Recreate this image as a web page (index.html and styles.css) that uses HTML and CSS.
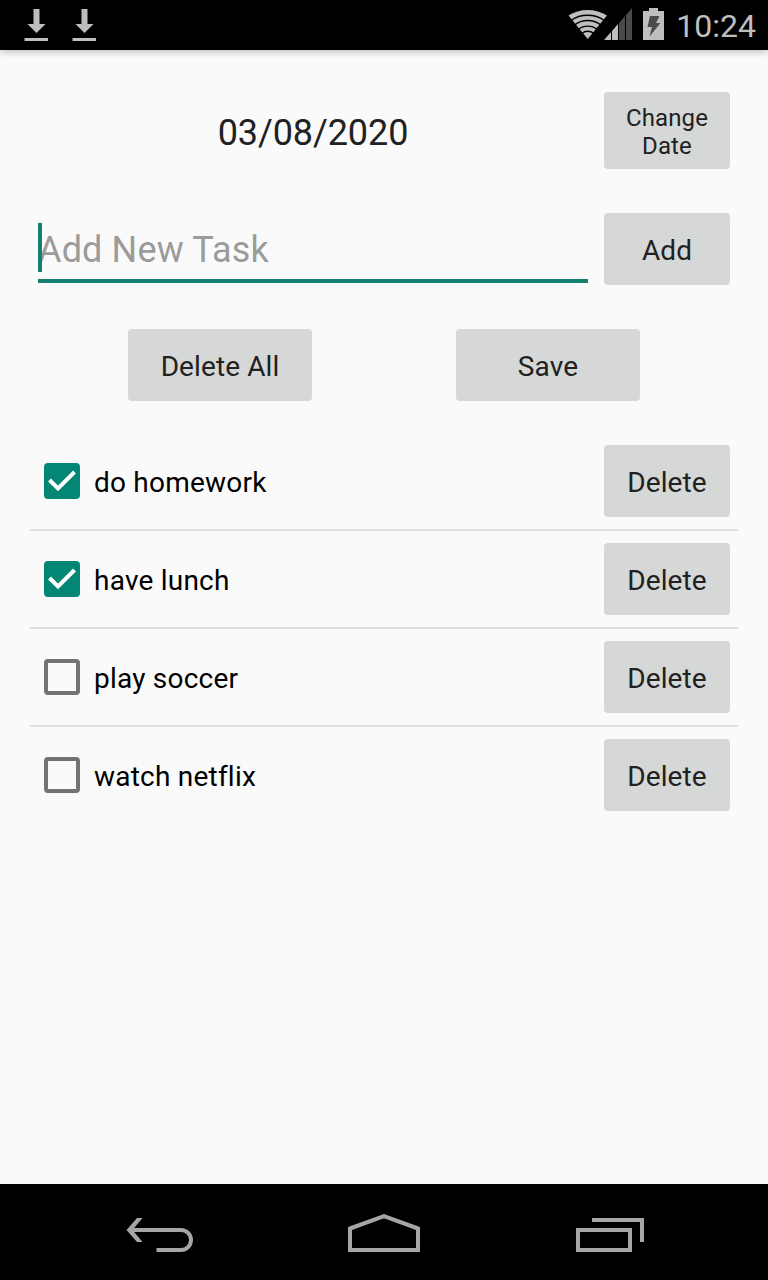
FILE: index.html
```
<!DOCTYPE html>
<html lang="en">
<head>
  <meta charset="UTF-8">
  <meta name="viewport" content="width=device-width, initial-scale=1">
  <title>To Do List</title>
  <link rel="stylesheet" href="styles.css">
</head>
<body>
  <header class="status-bar">
    <div class="notifications">
      <svg width="24" height="34" viewBox="0 0 24 34"><path d="M9.500 1h6v15h6l-9 9-9-9h6zM0.500 30h23.500v3H0.500z"/></svg>
      <svg width="24" height="34" viewBox="0 0 24 34"><path d="M9.500 1h6v15h6l-9 9-9-9h6zM0.500 30h23.500v3H0.500z"/></svg>
    </div>
    <div class="system">
      <svg class="wifi" width="40" height="32" viewBox="0 0 40 32">
        <path d="M0.500 7.500C11 0 28 0 39 7.500L19.700 31z"/>
        <g class="gap">
          <path d="M3.500 12.300C12 5.500 27 5.500 36 12.300"/>
          <path d="M7 16.800C14 11 25 11 32.500 16.800"/>
          <path d="M10.500 21.300C15.500 17 24 17 29 21.300"/>
          <path d="M14 25.500C17 22.500 22.500 22.500 25.500 25.500"/>
        </g>
      </svg>
      <svg class="signal" width="28" height="32" viewBox="0 0 28 32">
        <path d="M0 32L7 24v8zM8 32V23l6-7v16z"/>
        <path class="dim" d="M15 32V15l6-7v24zM22 32V7l6-7v32z"/>
      </svg>
      <svg class="battery" width="21" height="32" viewBox="0 0 21 32">
        <path d="M6 0h9v3h6v29H0V3h6z"/>
        <path class="bolt" d="M7 8h9.500l-3.500 7h4.500L6.500 28.500 9 19H4.500z"/>
      </svg>
      <span class="clock">10:24</span>
    </div>
  </header>

  <main>
    <div class="row date-row">
      <div class="date">03/08/2020</div>
      <button class="small">Change<br>Date</button>
    </div>

    <div class="row">
      <div class="field">
        <input type="text" id="newTask" placeholder="Add New Task">
        <span class="cursor"></span>
      </div>
      <button>Add</button>
    </div>

    <div class="actions">
      <button>Delete All</button>
      <button>Save</button>
    </div>

    <ul class="tasks">
      <li>
        <label><input type="checkbox" checked><span class="box"><svg width="36" height="36" viewBox="0 0 36 36"><path d="M5.500 17l8.500 8.500L30.500 9"/></svg></span><span class="name">do homework</span></label>
        <button>Delete</button>
      </li>
      <li>
        <label><input type="checkbox" checked><span class="box"><svg width="36" height="36" viewBox="0 0 36 36"><path d="M5.500 17l8.500 8.500L30.500 9"/></svg></span><span class="name">have lunch</span></label>
        <button>Delete</button>
      </li>
      <li>
        <label><input type="checkbox"><span class="box"><svg width="36" height="36" viewBox="0 0 36 36"><path d="M5.500 17l8.500 8.500L30.500 9"/></svg></span><span class="name">play soccer</span></label>
        <button>Delete</button>
      </li>
      <li>
        <label><input type="checkbox"><span class="box"><svg width="36" height="36" viewBox="0 0 36 36"><path d="M5.500 17l8.500 8.500L30.500 9"/></svg></span><span class="name">watch netflix</span></label>
        <button>Delete</button>
      </li>
    </ul>
  </main>

  <nav class="nav-bar">
    <svg width="72" height="40" viewBox="0 0 72 40">
      <path d="M6 18H57a10 10 0 0 1 0 20H32.500"/>
      <path class="head" d="M13 6h5.500L8.500 18l10 12H13L2.500 18z"/>
    </svg>
    <svg width="72" height="40" viewBox="0 0 72 40"><path d="M2 38V16.500L36 4.200 70 16.500V38z"/></svg>
    <svg width="72" height="40" viewBox="0 0 72 40"><path d="M6 18H58V38H6zM20 8H70V30"/></svg>
  </nav>
</body>
</html>
```

FILE: styles.css
```
* { box-sizing: border-box; }
body {
  font-family: Roboto, sans-serif;
  font-variant-ligatures: none;
  margin: 0;
  height: 1280px;
  display: flex;
  flex-direction: column;
  background: #fafafa;
  color: #212121;
  font-size: 28px;
}
svg {
  display: block;
}

/* status bar */
.status-bar {
  height: 50px;
  padding: 0 12px 0 24px;
  display: flex;
  justify-content: space-between;
  align-items: center;
  background: #000;
  color: #bebebe;
  fill: #bebebe;
  box-shadow: 0 1px 8px rgba(0, 0, 0, 0.3);
}
.notifications {
  display: flex;
  gap: 24px;
}
.system {
  display: flex;
  align-items: flex-start;
}
.system svg {
  margin-top: 8px;
}
.wifi .gap {
  fill: none;
  stroke: #000;
  stroke-width: 1.4;
}
.system .signal {
  margin-left: -4px;
}
.signal .dim,
.battery .bolt {
  fill: #4a4a4a;
}
.system .battery {
  margin-left: 11px;
  margin-right: 12px;
}
.clock {
  font-size: 32px;
  line-height: 52px;
  height: 50px;
}

/* content */
main {
  flex: 1;
  padding: 42px 30px 0;
}
button {
  width: 126px;
  height: 72px;
  padding: 2px 0 0;
  border: none;
  border-radius: 4px;
  background: #d6d7d7;
  color: #212121;
  font: inherit;
  letter-spacing: 0.1px;
  line-height: 33px;
  cursor: pointer;
}
button:hover {
  background: #c8c9c9;
}
button.small {
  height: 77px;
  font-size: 24px;
  line-height: 28px;
}
.row {
  display: flex;
  gap: 16px;
  margin: 0 8px 44px;
}
.date {
  flex: 1;
  font-size: 36px;
  line-height: 83px;
  letter-spacing: -0.1px;
  text-align: center;
}
.date-row {
  height: 77px;
}
.field {
  flex: 1;
  position: relative;
  height: 70px;
  border-bottom: 4px solid #15806f;
}
.field input {
  width: 100%;
  height: 66px;
  padding: 8px 0 0;
  border: none;
  outline: none;
  background: none;
  font: inherit;
  font-size: 36px;
  letter-spacing: 0.15px;
}
.field input::placeholder {
  color: #9b9b9b;
}
.cursor {
  position: absolute;
  left: 0;
  top: 10px;
  width: 4px;
  height: 49px;
  background: #15806f;
}
.actions {
  display: flex;
  justify-content: center;
  gap: 144px;
  margin-bottom: 32px;
}
.actions button {
  width: 184px;
}

/* task list */
.tasks {
  list-style: none;
  margin: 0;
  padding: 0;
}
.tasks li {
  display: flex;
  justify-content: space-between;
  align-items: center;
  height: 98px;
  padding: 0 8px 0 14px;
  border-bottom: 2px solid #e0e0e0;
}
.tasks li:last-child {
  border-bottom-color: transparent;
}
.tasks label {
  display: flex;
  align-items: center;
  gap: 14px;
  color: #000;
}
.tasks input {
  display: none;
}
.name {
  padding-top: 2px;
  letter-spacing: 0.22px;
}
.box {
  width: 36px;
  height: 36px;
  border: 4px solid #737373;
  border-radius: 4px;
}
.box svg {
  display: none;
  margin: -4px;
  fill: none;
  stroke: #fff;
  stroke-width: 4;
}
.tasks input:checked + .box {
  border-color: #048674;
  background: #048674;
}
.tasks input:checked + .box svg {
  display: block;
}

/* navigation bar */
.nav-bar {
  height: 96px;
  padding: 0 124px;
  display: flex;
  justify-content: space-between;
  align-items: center;
  background: #000;
  fill: none;
  stroke: #a6a6a6;
  stroke-width: 4;
}
.nav-bar .head {
  fill: #a6a6a6;
  stroke: none;
}
```
